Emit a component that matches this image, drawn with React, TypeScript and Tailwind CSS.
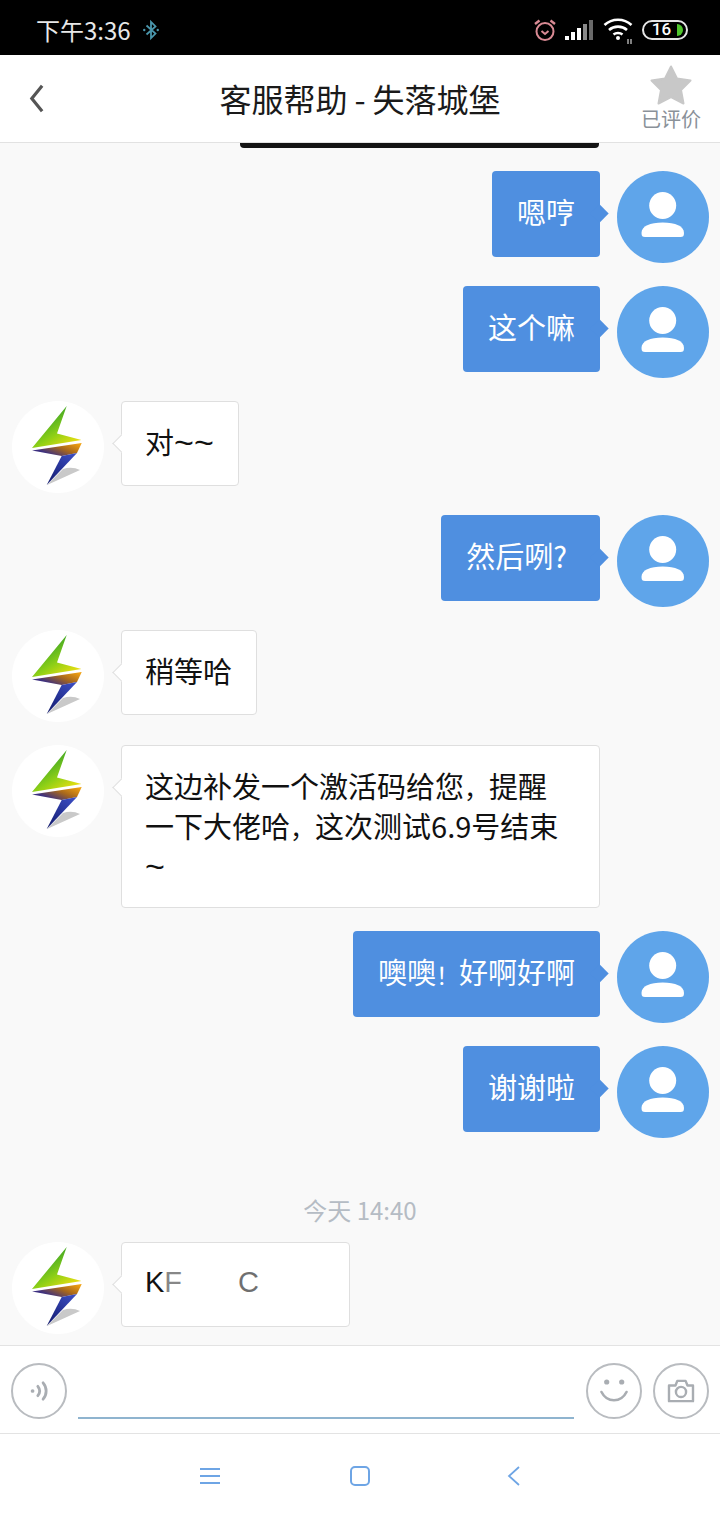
import React from "react";

const cjk = "font-['Noto_Sans_CJK_SC','Noto_Sans',sans-serif]";

function Logo() {
  return (
    <svg viewBox="0 0 92 92" className="w-[92px] h-[92px] shrink-0 rounded-full bg-white">
      <defs>
        <linearGradient id="boltTop" x1="0.2" y1="0.2" x2="0.8" y2="1">
          <stop offset="0" stopColor="#2f9e2a" />
          <stop offset="0.55" stopColor="#8fd016" />
          <stop offset="1" stopColor="#f5e010" />
        </linearGradient>
        <linearGradient id="boltBelly" x1="0.9" y1="0" x2="0.1" y2="0.5">
          <stop offset="0" stopColor="#f0a010" />
          <stop offset="0.5" stopColor="#a8681c" />
          <stop offset="1" stopColor="#3c2f80" />
        </linearGradient>
        <linearGradient id="boltLow" x1="0.8" y1="0" x2="0.2" y2="1">
          <stop offset="0" stopColor="#3a4cc0" />
          <stop offset="1" stopColor="#141c70" />
        </linearGradient>
      </defs>
      <path d="M35 84 L68 69 Q60 65 51 68 Z" fill="#c9c9c9" />
      <path d="M54.7 5 L20 47 L69.5 39 L45 32.5 Z" fill="url(#boltTop)" />
      <path d="M20 49.5 L69.7 42 L65 52 L49.7 55 Z" fill="url(#boltBelly)" />
      <path d="M65 52 L34.7 84 L49.7 55 Z" fill="url(#boltLow)" />
    </svg>
  );
}

function UserAvatar() {
  return (
    <svg viewBox="0 0 92 92" className="w-[92px] h-[92px] shrink-0">
      <circle cx="46" cy="46" r="46" fill="#5fa5ea" />
      <circle cx="45.7" cy="34.5" r="13.5" fill="#fff" />
      <path d="M24.5 62 C24.5 55 33 51.5 45.7 51.5 C58.5 51.5 67 55 67 62 C67 65 66 66 63.5 66 L28 66 C25.5 66 24.5 65 24.5 62 Z" fill="#fff" />
    </svg>
  );
}

function Mine({ children, top = "mt-[23px]" }: { children: React.ReactNode; top?: string }) {
  return (
    <div className={`flex justify-end items-start gap-[17px] pr-[11px] ${top}`}>
      <div className="relative bg-[#4f8fe0] rounded-[4px] px-[25px] pt-[20px] pb-[26px] text-white text-[29px] leading-[40px]">
        <span className="absolute -right-[6px] top-[36px] w-[13px] h-[13px] rotate-45 bg-[#4f8fe0]" />
        {children}
      </div>
      <UserAvatar />
    </div>
  );
}

function Theirs({
  children,
  top = "mt-[23px]",
  bottom = "pb-[24px]",
  className = "",
}: {
  children: React.ReactNode;
  top?: string;
  bottom?: string;
  className?: string;
}) {
  return (
    <div className={`flex items-start gap-[17px] pl-[12px] ${top}`}>
      <Logo />
      <div className={`relative bg-white border border-[#dfdfdf] rounded-[4px] pl-[23px] pr-[24px] pt-[19px] text-[#111] text-[29px] leading-[40px] ${bottom} ${className}`}>
        <span className="absolute -left-[7px] top-[35px] w-[13px] h-[13px] rotate-45 bg-white border-l border-b border-[#dfdfdf]" />
        {children}
      </div>
    </div>
  );
}

function Tilde() {
  return <span className="font-['Liberation_Sans',sans-serif] text-[34px] leading-[32px]">~</span>;
}

function StatusBar() {
  return (
    <div className="h-[55px] shrink-0 bg-black flex items-center pl-[36px] pr-[32px] pt-[4px]">
      <span className="text-[#e8e8e8] text-[24px] leading-none">下午3:36</span>
      <svg viewBox="0 0 20 24" className="w-[18px] h-[22px] ml-[11px]" fill="none" stroke="#4a97ad" strokeWidth="2">
        <path d="M5 7 L15 16 L10 21 L10 3 L15 8 L5 17" />
        <circle cx="2.5" cy="12" r="1.3" fill="#4a97ad" stroke="none" />
        <circle cx="17.5" cy="12" r="1.3" fill="#4a97ad" stroke="none" />
      </svg>
      <div className="flex-1" />
      <svg viewBox="0 0 24 24" className="w-[24px] h-[24px]" fill="none" stroke="#d98a94" strokeWidth="2">
        <circle cx="12" cy="13.5" r="8.5" />
        <path d="M8.5 13 L12 16 L15.5 13" />
        <path d="M2 6 L6.5 2.5 M22 6 L17.5 2.5" strokeWidth="2.4" />
      </svg>
      <svg viewBox="0 0 28 22" className="w-[28px] h-[22px] ml-[8px]">
        <rect x="0" y="17" width="4" height="4" fill="#fff" />
        <rect x="6" y="13" width="4" height="8" fill="#fff" />
        <rect x="12" y="9" width="4" height="12" fill="#fff" />
        <rect x="18" y="5" width="4" height="16" fill="#8a8a8a" />
        <rect x="24" y="1" width="4" height="20" fill="#6a6a6a" />
      </svg>
      <svg viewBox="0 0 30 30" className="w-[30px] h-[30px] ml-[10px]" fill="none" stroke="#fff" strokeWidth="2.6">
        <path d="M1.5 10 C9 3 21 3 28.5 10" />
        <path d="M6 15 C11 10.5 19 10.5 24 15" />
        <path d="M10.5 19.5 C13 17.5 17 17.5 19.5 19.5" />
        <circle cx="15" cy="23" r="2" fill="#fff" stroke="none" />
        <path d="M25 24 V29 M28 24 V29" stroke="#b5b5b5" strokeWidth="1.4" />
      </svg>
      <div className="relative ml-[9px] w-[46px] h-[20px] rounded-[10px] border-2 border-[#e5e5e5] flex items-center justify-center">
        <span className="text-white text-[17px] leading-none font-medium font-['Roboto',sans-serif] pr-[7px]">16</span>
        <span className="absolute right-[3px] top-[2px] w-[6px] h-[12px] rounded-r-[6px] bg-[#4fc52c]" />
      </div>
    </div>
  );
}

function Header() {
  return (
    <div className="h-[88px] shrink-0 bg-white border-b border-[#e2e2e2] flex items-center relative">
      <svg viewBox="0 0 16 30" className="absolute left-[29px] top-[29px] w-[15px] h-[29px]" fill="none" stroke="#555" strokeWidth="3.4">
        <path d="M14 1.5 L3 15 L14 28.5" />
      </svg>
      <div className="flex-1 text-center text-[#1a1a1a] text-[32px] leading-none pb-[1px]">
        客服帮助<span className="mx-[7px]">-</span>失落城堡
      </div>
      <div className="absolute right-[19px] top-[10px] w-[60px] flex flex-col items-center">
        <svg viewBox="0 0 42 40" className="w-[42px] h-[40px]">
          <path d="M21 1.5 L27 13.5 L40.5 15.5 L31 25 L33.5 38.5 L21 32 L8.5 38.5 L11 25 L1.5 15.5 L15 13.5 Z" fill="#c8c8c8" stroke="#c8c8c8" strokeWidth="2" strokeLinejoin="round" />
        </svg>
        <span className="text-[#8a9199] text-[20px] leading-[24px] whitespace-nowrap mt-[2px]">已评价</span>
      </div>
    </div>
  );
}

function Messages() {
  return (
    <div className="flex-1 min-h-0 overflow-hidden bg-[#f9f9f9]">
      <div className="ml-[240px] w-[359px] h-[5px] bg-[#141414] rounded-b-[4px]" />
      <Mine>嗯哼</Mine>
      <Mine>这个嘛</Mine>
      <Theirs>
        对<Tilde />
        <Tilde />
      </Theirs>
      <Mine top="mt-[22px]">
        然后咧?<span className="inline-block w-[8px]" />
      </Mine>
      <Theirs>稍等哈</Theirs>
      <Theirs className="w-[479px]" bottom="pb-[22px]">
        这边补发一个激活码给您<span className="text-[25px] leading-none">，</span>提醒
        <br />
        一下大佬哈<span className="text-[25px] leading-none">，</span>这次测试6.9号结束
        <br />
        <Tilde />
      </Theirs>
      <Mine>
        噢噢<span className="text-[23px] leading-none">！</span>好啊好啊
      </Mine>
      <Mine>谢谢啦</Mine>
      <div className="mt-[57px] text-center text-[#b5bcc4] text-[24px] leading-[30px]">今天 14:40</div>
      <Theirs top="mt-[17px]" className="w-[229px]">
        <span className="block font-['Liberation_Sans',sans-serif]">
          K<span className="opacity-50">F</span>
          <span className="ml-[56px] opacity-60">C</span>
        </span>
      </Theirs>
    </div>
  );
}

function InputBar() {
  return (
    <div className="h-[89px] shrink-0 bg-white border-y border-[#e3e3e3] flex items-start pt-[17px] pl-[11px] pr-[11px]">
      <div className="w-[56px] h-[56px] rounded-full border-2 border-[#b9bcc0] flex items-center justify-center">
        <svg viewBox="0 0 24 24" className="w-[28px] h-[28px]" fill="none" stroke="#a9adb2" strokeWidth="2.4" strokeLinecap="round">
          <circle cx="6.5" cy="12" r="1.6" fill="#a9adb2" stroke="none" />
          <path d="M11 8 C13 10.5 13 13.5 11 16" />
          <path d="M15.5 5 C19 9 19 15 15.5 19" />
        </svg>
      </div>
      <div className="ml-[11px] mr-[12px] w-[497px] h-[56px] border-b-2 border-[#8fb4cf]" />
      <div className="w-[56px] h-[56px] rounded-full border-2 border-[#b9bcc0] flex items-center justify-center">
        <svg viewBox="0 0 28 24" className="w-[28px] h-[24px]" fill="none" stroke="#a9adb2" strokeWidth="2.6" strokeLinecap="round">
          <circle cx="6.7" cy="3" r="2.6" fill="#a9adb2" stroke="none" />
          <circle cx="21.7" cy="3" r="2.6" fill="#a9adb2" stroke="none" />
          <path d="M1.5 13 C7 24 21 24 26.5 13" />
        </svg>
      </div>
      <div className="ml-[11px] w-[56px] h-[56px] rounded-full border-2 border-[#b9bcc0] flex items-center justify-center">
        <svg viewBox="0 0 30 26" className="w-[28px] h-[24px]" fill="none" stroke="#a9adb2" strokeWidth="2.6" strokeLinejoin="round">
          <path d="M2 7 L9 7 L11 2 L20 2 L22 7 L28 7 L28 24 L2 24 Z" />
          <circle cx="15" cy="14" r="5.5" />
        </svg>
      </div>
    </div>
  );
}

function NavBar() {
  return (
    <div className="h-[86px] shrink-0 bg-white flex items-start justify-center pt-[32px]">
      <div className="flex items-center">
        <svg viewBox="0 0 20 16" className="w-[20px] h-[16px]" fill="none" stroke="#6ea5e5" strokeWidth="2">
          <path d="M0 1 H20 M0 8 H20 M0 15 H20" />
        </svg>
        <div className="ml-[130px] w-[20px] h-[20px] rounded-[5px] border-2 border-[#6ea5e5]" />
        <svg viewBox="0 0 13 20" className="ml-[137px] w-[13px] h-[20px]" fill="none" stroke="#6ea5e5" strokeWidth="1.8">
          <path d="M12 1 L2 10 L12 19" />
        </svg>
      </div>
    </div>
  );
}

export default function App() {
  return (
    <div className={`w-[720px] h-[1520px] flex flex-col overflow-hidden ${cjk}`}>
      <StatusBar />
      <Header />
      <Messages />
      <InputBar />
      <NavBar />
    </div>
  );
}
